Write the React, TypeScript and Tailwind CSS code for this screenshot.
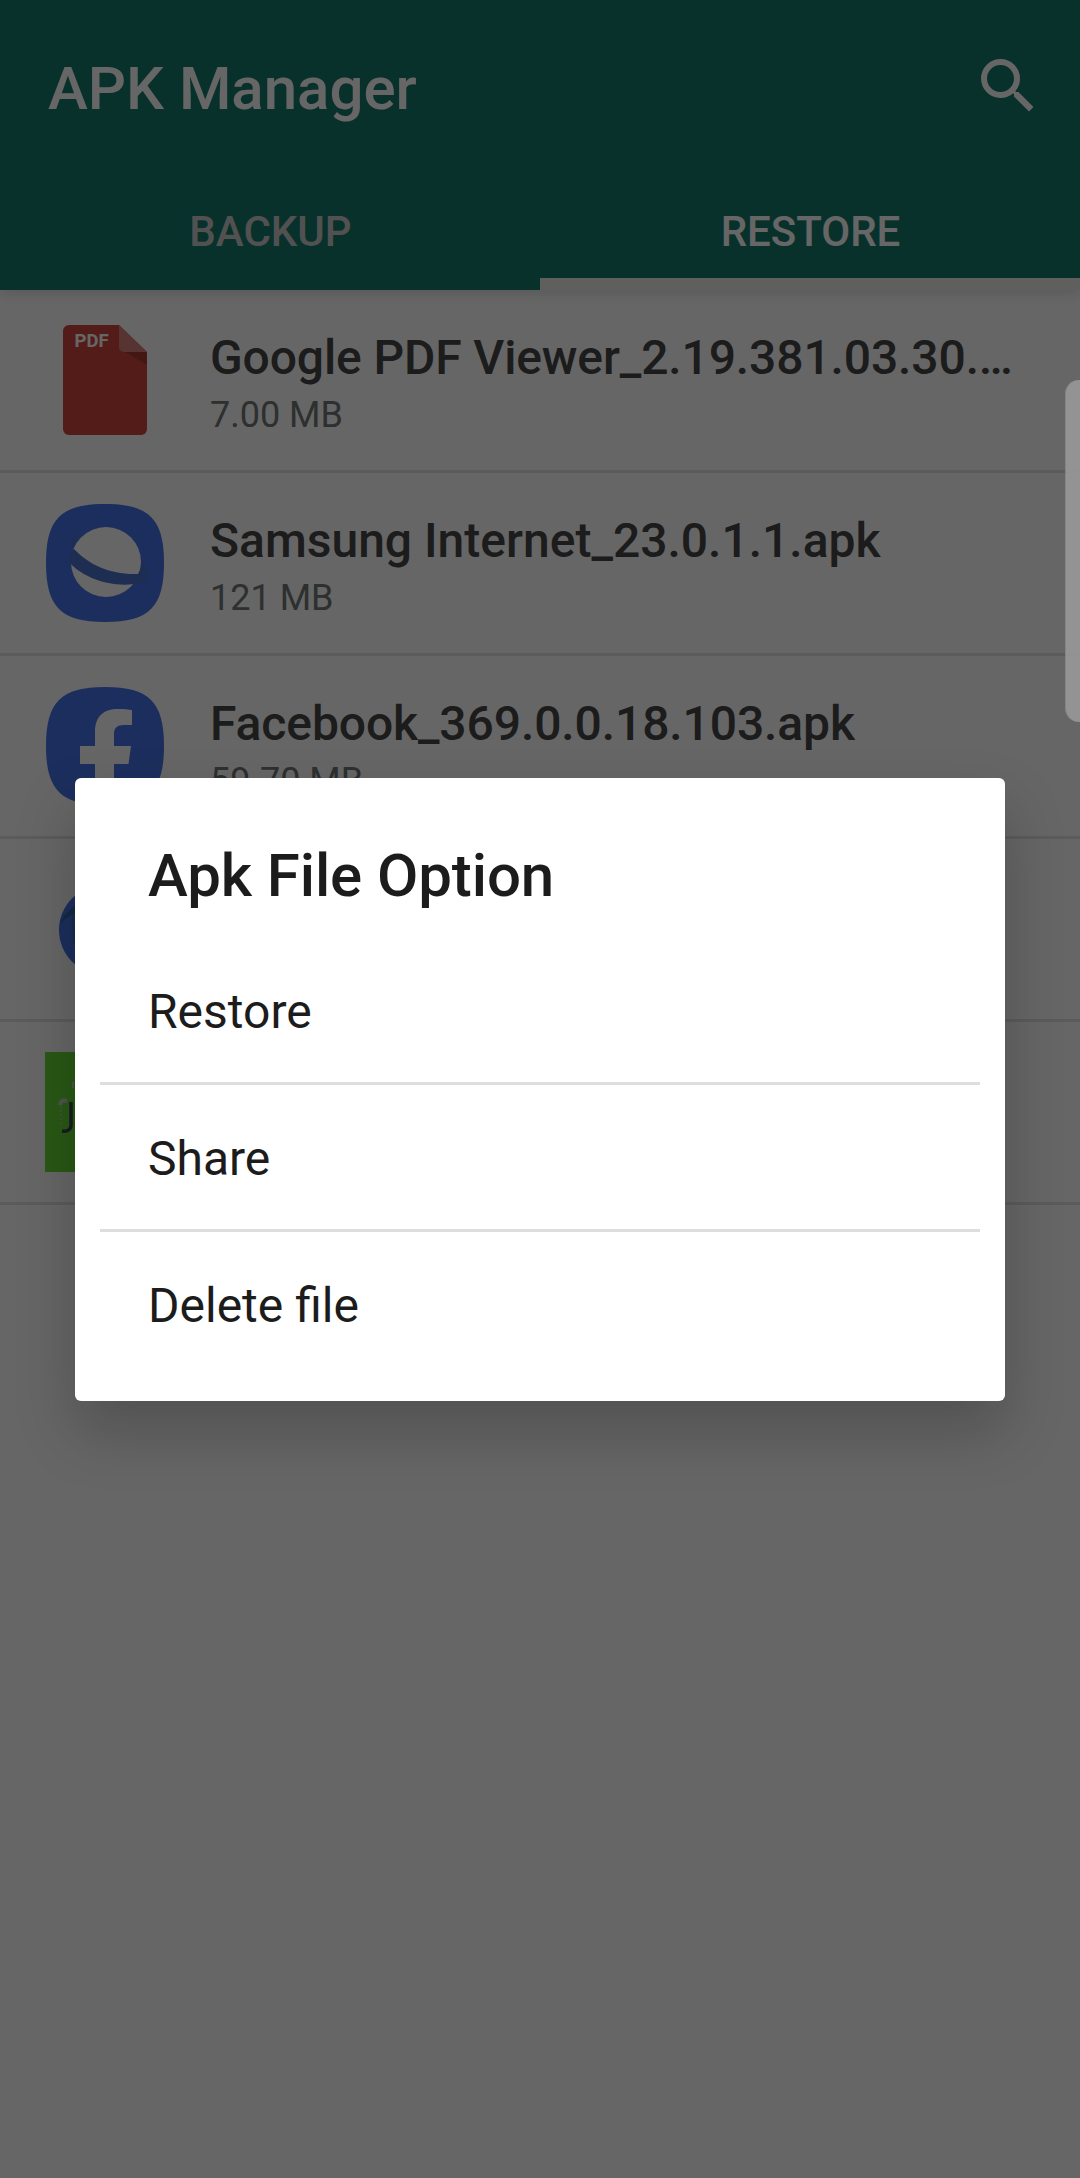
import React, { useState } from 'react';
import { MdSearch } from 'react-icons/md';

const SQUIRCLE = 'M60 1C104 1 119 16 119 60S104 119 60 119 1 104 1 60 16 1 60 1Z';

const PdfIcon: React.FC = () => (
  <svg viewBox="0 0 120 120" className="w-[120px] h-[120px]">
    <path d="M24 5H74L102 32V109a6 6 0 0 1-6 6H24a6 6 0 0 1-6-6V11a6 6 0 0 1 6-6Z" fill="#d2463c" />
    <path d="M80 32H102V45Z" fill="#a83b33" />
    <path d="M74 5L102 32H79a5 5 0 0 1-5-5Z" fill="#d9837c" />
    <text x="29.5" y="27" fontSize="18.5" fontWeight="700" fill="#fff" fontFamily="Roboto, sans-serif">PDF</text>
  </svg>
);

const InternetIcon: React.FC = () => (
  <svg viewBox="0 0 120 120" className="w-[120px] h-[120px]">
    <path d={SQUIRCLE} fill="#4873e8" />
    <circle cx="61" cy="59" r="35" fill="#fff" />
    <path d="M29 46C24 36 28 30 34 31C30 34 28 40 29 46C44 62 66 72 93 71C96 66 97 60 96 54C103 66 105 76 98 79C72 87 40 76 26 61C22 55 25 49 29 46Z" fill="#4b70cd" />
  </svg>
);

const FacebookIcon: React.FC = () => (
  <svg viewBox="0 0 120 120" className="w-[120px] h-[120px]">
    <path d={SQUIRCLE} fill="#4873e8" />
    <path d="M50 119V78H35V60H50V46C50 30 59 23 73 23C79 23 84 23.5 87 24V39H79C72 39 69 42 69 48V60H86L83.5 78H69V119Z" fill="#fff" />
  </svg>
);

const EarthIcon: React.FC = () => (
  <svg viewBox="0 0 120 120" className="w-[120px] h-[120px]">
    <circle cx="59" cy="61" r="45" fill="#4873e8" />
    <path d="M15 56C17 48 23 41 32 36V45C25 45 20 49 15 56Z" fill="#1f6b7b" opacity="0.7" />
    <path d="M27 46H32V84L28 72Z" fill="#1f6b7b" opacity="0.4" />
  </svg>
);

const GreenIcon: React.FC = () => (
  <svg viewBox="0 0 120 120" className="w-[120px] h-[120px]">
    <rect width="120" height="120" fill="#67dc37" />
    <path d="M15 53Q16 47 22 49" fill="none" stroke="#d0d0d0" strokeWidth="4" />
    <path d="M16 54V72" fill="none" stroke="#b4c8aa" strokeWidth="1.5" strokeDasharray="2 2" />
    <path d="M26 50V74Q25 80 17 79" fill="none" stroke="#3c4650" strokeWidth="3.500" />
    <path d="M28 30V36" fill="none" stroke="#c8c8c8" strokeWidth="2" />
  </svg>
);

const FILES = [
  { id: 'pdf', name: 'Google PDF Viewer_2.19.381.03.30.…', size: '7.00 MB', icon: <PdfIcon />, tracking: 'tracking-[-0.12px]' },
  { id: 'internet', name: 'Samsung Internet_23.0.1.1.apk', size: '121 MB', icon: <InternetIcon />, tracking: 'tracking-normal' },
  { id: 'facebook', name: 'Facebook_369.0.0.18.103.apk', size: '59.70 MB', icon: <FacebookIcon />, tracking: 'tracking-[-0.1px]' },
  { id: 'earth', name: '', size: '', icon: <EarthIcon />, tracking: 'tracking-normal' },
  { id: 'green', name: '', size: '', icon: <GreenIcon />, tracking: 'tracking-normal' },
];

const TABS = ['BACKUP', 'RESTORE'];
const OPTIONS = ['Restore', 'Share', 'Delete file'];

const App: React.FC = () => {
  const [activeTab, setActiveTab] = useState('RESTORE');

  return (
    <div className="relative w-[1080px] h-[2178px] bg-white overflow-hidden font-[Roboto,sans-serif]">
      {/* App bar */}
      <header className="relative z-10 h-[290px] flex flex-col bg-[#177a6b] shadow-[0_3px_14px_rgba(0,0,0,0.14)]">
        <div className="h-[174px] flex items-center justify-between pl-12 pr-9">
          <h1 className="pt-[3px] text-[60px] leading-[70px] font-medium text-white">APK Manager</h1>
          <button className="pb-[2px]"><MdSearch size={72} className="text-white" /></button>
        </div>
        <div className="flex-1 grid grid-cols-2">
          {TABS.map((tab) => (
            <button
              key={tab}
              onClick={() => setActiveTab(tab)}
              className={`text-[42px] leading-[50px] font-medium border-b-[12px] pt-[11px] pl-[1px] ${
                activeTab === tab ? 'text-white border-[#ededeb]' : 'text-[#cbcbcb] border-transparent'
              }`}
            >
              {tab}
            </button>
          ))}
        </div>
      </header>

      {/* File list */}
      <ul>
        {FILES.map((file) => (
          <li key={file.id} className="h-[183px] flex items-center pl-[45px] border-b-[3px] border-[#e4e4e4]">
            {file.icon}
            <div className="pt-[7px] pl-[45px] whitespace-nowrap">
              <p className={`h-[62px] text-[48px] leading-[62px] font-medium text-[#464646] ${file.tracking}`}>{file.name}</p>
              <p className="h-[52px] text-[36px] leading-[52px] text-[#707876]">{file.size}</p>
            </div>
          </li>
        ))}
      </ul>

      {/* Dimmed backdrop with the option dialog */}
      <div className="absolute inset-0 z-20 flex items-center justify-center bg-black/60">
        <div role="dialog" className="w-[930px] h-[623px] rounded-[6px] bg-white text-[#1c1c1c] shadow-[0_30px_60px_rgba(0,8,6,0.22)]">
          <h2 className="h-[160px] pt-[63px] pl-[73px] text-[60px] leading-[70px] font-medium tracking-[-0.1px]">Apk File Option</h2>
          <ul className="mx-[25px] divide-y-[3px] divide-[#dddedd]">
            {OPTIONS.map((option) => (
              <li key={option} className="h-[147px] last:h-[144px] flex items-center pl-12 pt-[5px] text-[48px]">{option}</li>
            ))}
          </ul>
        </div>
      </div>

      {/* Edge panel handle */}
      <div className="absolute z-30 right-0 top-[380px] w-[15px] h-[342px] rounded-l-[14px] bg-[#969696]/95 border-l border-[#858585]"></div>
    </div>
  );
};

export default App;
